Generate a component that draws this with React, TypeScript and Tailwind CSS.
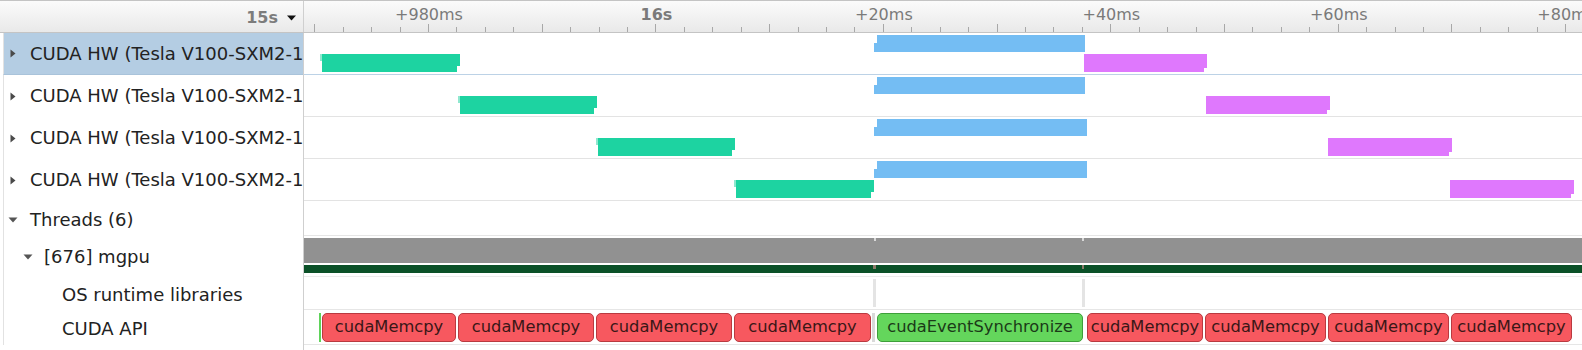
import React from "react";

const TL = 304;

type Bar = { x1: number; x2: number };

const hwRows: { green: Bar; blue: Bar; purple: Bar }[] = [
  { green: { x1: 320, x2: 460 }, blue: { x1: 874, x2: 1085 }, purple: { x1: 1084, x2: 1207 } },
  { green: { x1: 458, x2: 597 }, blue: { x1: 874, x2: 1085 }, purple: { x1: 1206, x2: 1330 } },
  { green: { x1: 596, x2: 735 }, blue: { x1: 874, x2: 1087 }, purple: { x1: 1328, x2: 1452 } },
  { green: { x1: 734, x2: 874 }, blue: { x1: 874, x2: 1087 }, purple: { x1: 1450, x2: 1574 } },
];

const apiBoxes: { x1: number; x2: number; label: string; ok?: boolean }[] = [
  { x1: 322, x2: 456, label: "cudaMemcpy" },
  { x1: 458, x2: 594, label: "cudaMemcpy" },
  { x1: 596, x2: 732, label: "cudaMemcpy" },
  { x1: 734, x2: 871, label: "cudaMemcpy" },
  { x1: 877, x2: 1083, label: "cudaEventSynchronize", ok: true },
  { x1: 1087, x2: 1203, label: "cudaMemcpy" },
  { x1: 1205, x2: 1326, label: "cudaMemcpy" },
  { x1: 1328, x2: 1449, label: "cudaMemcpy" },
  { x1: 1451, x2: 1572, label: "cudaMemcpy" },
];

const ticks = Array.from({ length: 46 }, (_, i) => i - 5).map((k) => ({
  k,
  x: 428 + 28.43 * k - TL,
}));

const labels: { k: number; text: string; bold?: boolean }[] = [
  { k: 0, text: "+980ms" },
  { k: 8, text: "16s", bold: true },
  { k: 16, text: "+20ms" },
  { k: 24, text: "+40ms" },
  { k: 32, text: "+60ms" },
  { k: 40, text: "+80ms" },
];

function RightTri() {
  return (
    <svg width="6" height="9" viewBox="0 0 6 9" className="shrink-0">
      <path d="M0.5 0.5 L5.5 4.5 L0.5 8.5 Z" fill="#4a4a4a" />
    </svg>
  );
}

function DownTri() {
  return (
    <svg width="10" height="6" viewBox="0 0 10 6" className="shrink-0">
      <path d="M0.5 0.5 L9.5 0.5 L5 5.5 Z" fill="#555555" />
    </svg>
  );
}

function pos(x1: number, x2: number) {
  return { left: x1 - TL, width: x2 - x1 };
}

function HwBars({ row }: { row: { green: Bar; blue: Bar; purple: Bar } }) {
  return (
    <>
      {/* blue */}
      <div className="absolute top-[10px] h-[9px] bg-[#74bdf3]" style={pos(row.blue.x1, row.blue.x1 + 4)} />
      <div className="absolute top-[2px] h-[17px] bg-[#74bdf3]" style={pos(row.blue.x1 + 3, row.blue.x2)} />
      {/* green */}
      <div className="absolute top-[21px] h-[7px] bg-[#8fe8cf]" style={pos(row.green.x1, row.green.x1 + 3)} />
      <div className="absolute top-[21px] h-[18px] bg-[#1dd3a1]" style={pos(row.green.x1 + 2, row.green.x2 - 3)} />
      <div className="absolute top-[21px] h-[12px] bg-[#1dd3a1]" style={pos(row.green.x2 - 4, row.green.x2)} />
      {/* purple */}
      <div className="absolute top-[21px] h-[18px] bg-[#df78fd]" style={pos(row.purple.x1, row.purple.x2 - 3)} />
      <div className="absolute top-[21px] h-[14px] bg-[#df78fd]" style={pos(row.purple.x2 - 4, row.purple.x2)} />
    </>
  );
}

export default function App() {
  return (
    <div className="w-[1582px] h-[350px] overflow-hidden bg-white font-['DejaVu_Sans',Verdana,sans-serif] text-[#222]">
      {/* header */}
      <div className="flex h-[33px] border-t border-b border-[#c4c4c4] bg-gradient-to-b from-[#fbfbfb] to-[#e9e9e9]">
        <div className="w-[304px] shrink-0 border-r border-[#cfcfcf] flex items-center justify-end gap-[9px] pr-[7px] pt-[3px]">
          <span className="text-[16px] font-bold text-[#7c7c7c] leading-none">15s</span>
          <svg width="9" height="6" viewBox="0 0 9 6">
            <path d="M0 0.5 L9 0.5 L4.5 5.5 Z" fill="#111" />
          </svg>
        </div>
        <div className="relative flex-1 overflow-hidden">
          {labels.map((l) => (
            <span
              key={l.k}
              className={`absolute top-[6px] -translate-x-1/2 text-[16px] leading-none whitespace-nowrap text-[#7a7a7a] ${
                l.bold ? "font-bold" : ""
              }`}
              style={{ left: 428 + 28.43 * l.k - TL + 1 }}
            >
              {l.text}
            </span>
          ))}
          <svg className="absolute inset-0" width="1278" height="31">
            {ticks.map((t) => (
              <line
                key={t.k}
                x1={Math.round(t.x) + 0.5}
                x2={Math.round(t.x) + 0.5}
                y1={t.k % 4 === 0 ? 23 : 26}
                y2={31}
                stroke="#a8a8a8"
                strokeWidth="1"
              />
            ))}
          </svg>
        </div>
      </div>

      {/* CUDA HW rows */}
      {hwRows.map((row, i) => (
        <div key={i} className="flex h-[42px]">
          <div className="w-[304px] shrink-0 border-r border-[#cfcfcf] pl-[3px]">
            <div
              className={`h-full flex items-center gap-[14px] pl-[6px] overflow-hidden whitespace-nowrap text-[18px] border-l border-[#e2e2e2] ${
                i === 0 ? "bg-[#b4cde3] border-b border-b-[#a9c3da]" : ""
              }`}
            >
              <RightTri />
              <span className="leading-none">CUDA HW (Tesla V100-SXM2-16GB, 0000:06:00.0 - 1)</span>
            </div>
          </div>
          <div className={`relative flex-1 border-b ${i === 0 ? "border-[#bcd2e6]" : "border-[#e3e3e3]"}`}>
            <HwBars row={row} />
          </div>
        </div>
      ))}

      {/* Threads */}
      <div className="flex h-[35px]">
        <div className="w-[304px] shrink-0 border-r border-[#cfcfcf] pl-[3px]">
          <div className="h-full flex items-center gap-[12px] pl-[4px] pt-[2px] text-[18px] border-l border-[#e2e2e2] whitespace-nowrap">
            <DownTri />
            <span className="leading-none">Threads (6)</span>
          </div>
        </div>
        <div className="relative flex-1 border-b border-[#e6e6e6]" />
      </div>

      {/* mgpu */}
      <div className="flex h-[41px]">
        <div className="w-[304px] shrink-0 border-r border-[#cfcfcf] pl-[3px]">
          <div className="h-full flex items-center gap-[11px] pl-[19px] text-[18px] border-l border-[#e2e2e2] whitespace-nowrap">
            <DownTri />
            <span className="leading-none">[676] mgpu</span>
          </div>
        </div>
        <div className="relative flex-1 border-b border-[#ececec]">
          <div className="mt-[2px] h-[25px] bg-[#919191]" />
          <div className="mt-[2px] h-[8px] bg-[#0b5128]" />
          <div className="absolute top-[2px] h-[3px] w-[2px] bg-[#d8d8d8]" style={{ left: 874 - TL }} />
          <div className="absolute top-[2px] h-[3px] w-[2px] bg-[#d8d8d8]" style={{ left: 1082 - TL }} />
          <div className="absolute top-[29px] h-[4px] w-[3px] bg-[#8c7a6a]" style={{ left: 873 - TL }} />
          <div className="absolute top-[29px] h-[4px] w-[2px] bg-[#8c7a6a]" style={{ left: 1082 - TL }} />
        </div>
      </div>

      {/* OS runtime libraries */}
      <div className="flex h-[33px]">
        <div className="w-[304px] shrink-0 border-r border-[#cfcfcf] pl-[3px]">
          <div className="h-full flex items-center pl-[58px] pt-[2px] text-[18px] border-l border-[#e2e2e2] whitespace-nowrap">
            <span className="leading-none">OS runtime libraries</span>
          </div>
        </div>
        <div className="relative flex-1 border-b border-[#e6e6e6]">
          <div className="absolute top-[2px] h-[28px] w-[3px] bg-[#e4e4e4]" style={{ left: 873 - TL }} />
          <div className="absolute top-[2px] h-[28px] w-[3px] bg-[#e4e4e4]" style={{ left: 1082 - TL }} />
        </div>
      </div>

      {/* CUDA API */}
      <div className="flex h-[40px]">
        <div className="w-[304px] shrink-0 border-r border-[#cfcfcf] pl-[3px]">
          <div className="h-[35px] flex items-center pl-[58px] pt-[2px] text-[18px] border-l border-[#e2e2e2] whitespace-nowrap">
            <span className="leading-none">CUDA API</span>
          </div>
        </div>
        <div className="relative flex-1">
          <div className="h-[35px] border-b border-[#e6e6e6]" />
          <div className="absolute top-[3px] h-[29px] w-[2px] bg-[#5fd35a]" style={{ left: 319 - TL }} />
          <div className="absolute top-[3px] h-[29px] w-[3px] bg-[#d9d9d9]" style={{ left: 872 - TL }} />
          {apiBoxes.map((b, i) => (
            <div
              key={i}
              className={`absolute top-[3px] h-[29px] rounded-[5px] border flex items-center justify-center overflow-hidden whitespace-nowrap text-[16.3px] leading-none ${
                b.ok
                  ? "bg-[#64d65c] border-[#3e9f3a] text-[#1b3a18]"
                  : "bg-[#f7585f] border-[#b93a40] text-[#3a1717]"
              }`}
              style={pos(b.x1, b.x2)}
            >
              {b.label}
            </div>
          ))}
        </div>
      </div>
    </div>
  );
}
